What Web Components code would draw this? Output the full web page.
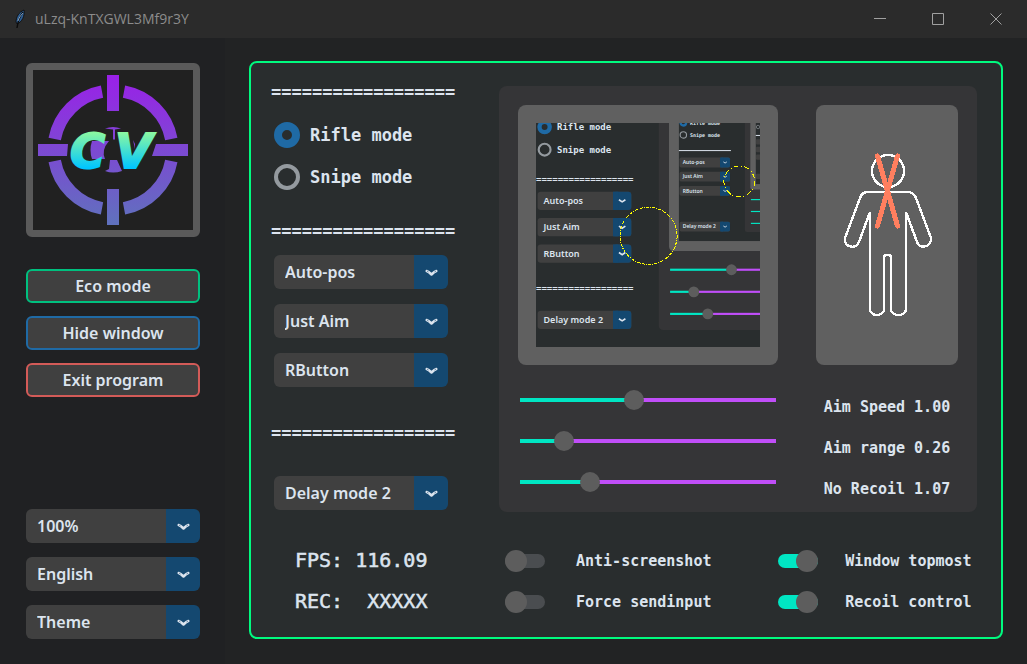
<!DOCTYPE html>
<html lang="en">
<head>
<meta charset="utf-8">
<title>uLzq-KnTXGWL3Mf9r3Y</title>
<style>
  html { height: 100%; }
  body {
    --mono: "DejaVu Sans Mono", "Liberation Mono", monospace;
    --ui: "Noto Sans", "Open Sans", sans-serif;
    --ink: #dce4ee;
    --accent: #1f6aa5;
    --field: #404040;
    --surface: #292d2e;
    --panel: #353537;
    --knob: #5d5d5d;
    --teal: #00e6c3;
    --violet: #c04ef8;
    margin: 0;
    min-height: 100%;
    display: flex;
    background: #222324;
    color: var(--ink);
    font-family: var(--ui);
    font-size: 16px;
  }
</style>
</head>
<body>
<app-window></app-window>

<script>
function define(name, html, setup) {
  const template = document.createElement('template');
  template.innerHTML = html;
  customElements.define(name, class extends HTMLElement {
    constructor() {
      super();
      this.attachShadow({ mode: 'open' }).append(template.content.cloneNode(true));
    }
    connectedCallback() { if (setup) setup(this, this.shadowRoot); }
  });
}

define('title-bar', `
<style>
  :host { display: flex; align-items: center; height: 38px; padding: 0 2px 0 12px; background: #2b2b2b; color: #8c8c8c; }
  h1 { flex: 1; margin: 0 0 0 7px; font: 400 14px/20px "Open Sans", var(--ui); }
  button { width: 58px; height: 38px; padding: 0; border: 0; background: none; color: #a0a0a0; }
  svg { display: block; margin: auto; }
</style>
<svg width="16" height="20" viewBox="0 0 16 20" style="margin:0" aria-hidden="true">
  <path d="M12 1C7 3 4 8 4 13l1 2C10 13 13 7 12 1z" fill="#2d5f96" stroke="#111" stroke-width="1"/>
  <path d="M11 3C8 7 6 11 5 19" fill="none" stroke="#0b0b0b" stroke-width="1.4"/>
  <path d="M11 4C8 7 7 9 6 12" fill="none" stroke="#9ec0e2" stroke-width=".8"/>
</svg>
<h1><slot></slot></h1>
<button aria-label="Minimize"><svg width="12" height="12"><path d="M0 5.5h12" stroke="currentColor"/></svg></button>
<button aria-label="Maximize"><svg width="12" height="12"><path d="M.5.5h11v11H.5z" fill="none" stroke="currentColor"/></svg></button>
<button aria-label="Close"><svg width="12" height="12"><path d="M.5.5l11 11M11.5.5l-11 11" fill="none" stroke="currentColor"/></svg></button>
`);

define('app-logo', `
<style>
  :host { display: block; box-sizing: border-box; border: 7px solid #5a5a5a; border-radius: 6px; background: #212121; }
  svg { display: block; width: 100%; }
  text { font: italic 700 48px "DejaVu Sans", sans-serif; }
</style>
<svg viewBox="33 70 160 160" role="img" aria-label="CV logo">
  <defs>
    <linearGradient id="ring" gradientUnits="userSpaceOnUse" x1="0" y1="75" x2="0" y2="225">
      <stop offset="0" stop-color="#9a20e8"/><stop offset="1" stop-color="#5f72bd"/>
    </linearGradient>
    <linearGradient id="word" gradientUnits="userSpaceOnUse" x1="0" y1="132" x2="0" y2="168">
      <stop offset="0" stop-color="#8cf9a0"/><stop offset="1" stop-color="#00c6ff"/>
    </linearGradient>
  </defs>
  <path d="M124 91.7A59 59 0 0 1 171.3 139M171.3 161A59 59 0 0 1 124 208.3M102 208.3A59 59 0 0 1 54.7 161M54.7 139A59 59 0 0 1 102 91.7" fill="none" stroke="url(#ring)" stroke-width="12.5"/>
  <path d="M107 75h12v36h-12zM107 189h12v36h-12zM38 144h30l-1 12H38zM156 144h32v12h-36z" fill="url(#ring)"/>
  <path d="M105 128.500q8-3 16 0l-6 1v10h-2v-10zM92 141h17q-8 9-4 18H92q-3-9 0-18zM110 160h7l5 11q-9 3-17 0l4-2zM133 140l2 4v5z" fill="url(#ring)"/>
  <text x="70 115" y="168" fill="url(#word)" stroke="url(#word)" stroke-width="2">CV</text>
</svg>
`);

define('action-button', `
<style>
  :host { display: block; }
  button { box-sizing: border-box; width: 100%; height: 34px; padding: 0; border: 2px solid var(--edge); border-radius: 6px; background: var(--field); color: inherit; font: 600 16px/24px var(--ui); }
</style>
<button><slot></slot></button>
`);

define('drop-down', `
<style>
  :host { display: block; position: relative; }
  select { appearance: none; display: block; box-sizing: border-box; width: 100%; height: 34px; padding: 0 40px 0 11px; border: 0; border-radius: 6px; color: inherit; font: 600 16px/24px var(--ui);
    background: linear-gradient(to left, #144870 34px, var(--field) 34px); }
  svg { position: absolute; right: 10px; top: 14px; pointer-events: none; }
</style>
<select></select>
<svg width="13" height="8" viewBox="0 0 13 8" aria-hidden="true">
  <path d="M1.700 2Q3.500 2.500 6.500 5.500Q9.500 2.500 11.300 2" fill="none" stroke="var(--ink)" stroke-width="2.500" stroke-linecap="round" stroke-linejoin="round"/>
  <path d="M2 2l1.500 1M11 2L9.500 3" stroke="#144870" stroke-width=".6"/>
</svg>
`, (host, root) => {
  const select = root.querySelector('select');
  select.setAttribute('aria-label', host.getAttribute('label'));
  select.replaceChildren(new Option(host.getAttribute('value')));
});

define('rule-line', `
<style>:host { display: block; height: 20px; white-space: nowrap; font: 700 17px/20px var(--mono); }</style>
<span>==================</span>
`);

define('mode-picker', `
<style>
  :host { display: grid; gap: 14px; }
  label { display: flex; align-items: center; gap: 10px; height: 28px; font: 700 17px/20px var(--mono); white-space: nowrap; }
  input { appearance: none; box-sizing: border-box; width: 26px; height: 26px; margin: 0; border: 4px solid #949a9f; border-radius: 50%; }
  input:checked { border: 8px solid var(--accent); }
</style>
<label><input type="radio" name="mode" checked>Rifle mode</label>
<label><input type="radio" name="mode">Snipe mode</label>
`);

define('toggle-switch', `
<style>
  :host { display: block; }
  label { display: flex; align-items: center; gap: var(--gap, 31px); height: 41px; margin-left: 6px; font: 700 15px/20px var(--mono); white-space: nowrap; }
  input { appearance: none; display: flex; align-items: center; width: 40px; height: 14px; margin: 0; border-radius: 7px; background: #4a4d50; }
  input::before { content: ""; width: 22px; height: 22px; flex: none; border-radius: 50%; background: var(--knob); }
  input:checked { background: var(--teal); justify-content: flex-end; }
</style>
<label><input type="checkbox"><slot></slot></label>
`, (host, root) => { root.querySelector('input').checked = host.hasAttribute('checked'); });

define('capture-view', `
<style>
  :host { display: block; padding: 18px; border-radius: 8px; background: #606060; }
  .screen { display: block; width: 100%; }
  .m { font-family: "DejaVu Sans Mono", monospace; font-weight: 700; }
  .u { font-family: "Noto Sans", sans-serif; font-weight: 600; }
</style>
<svg class="screen" viewBox="0 0 224 224" role="img" aria-label="Capture preview"></svg>
`, (host, root) => {
  const k = 0.5385;
  function frame(ox, oy, s, depth) {
    const X = v => +(ox + (v - 271) * s).toFixed(2);
    const Y = v => +(oy + (v - 127.500) * s).toFixed(2);
    const box = (x, y, w, h, r, fill) => `<rect x="${X(x)}" y="${Y(y)}" width="${w * s}" height="${h * s}" rx="${r * s}" fill="${fill}"/>`;
    const size = depth === 1 ? 9 : 5;
    const text = (x, y, t, cls) => depth > 2 ? '' : `<text class="${cls}" x="${X(x)}" y="${Y(y)}" font-size="${size}" fill="#dce4ee">${t}</text>`;
    let out = box(271, 127.500, 224 / k, 224 / k, 0, '#292d2e');
    out += box(499, 86, 478, 426, 8, '#353537');
    out += `<circle cx="${X(287)}" cy="${Y(135)}" r="${9.500 * s}" fill="none" stroke="#1f6aa5" stroke-width="${8 * s}"/>`;
    out += `<circle cx="${X(287)}" cy="${Y(177)}" r="${11 * s}" fill="none" stroke="#949a9f" stroke-width="${4 * s}"/>`;
    out += text(310, 141, 'Rifle mode', 'm') + text(310, 183, 'Snipe mode', 'm');
    for (const y of [231, 433]) {
      if (depth === 1) out += text(271, y + 6, '==================', 'm');
      else out += y === 231 ? `<path d="M${X(271)} ${Y(y)}h${180 * s}" stroke="#dce4ee"/>` : '';
    }
    [[255, 'Auto-pos'], [304, 'Just Aim'], [353, 'RButton'], [476, 'Delay mode 2']].forEach(([y, t]) => {
      out += box(274, y, 174, 34, 6, '#404040') + box(414, y, 34, 34, 6, '#144870') + box(414, y, 10, 34, 0, '#144870');
      out += text(285, y + 23, t, 'u');
      out += `<path d="M${X(425)} ${Y(y + 15)}l${6 * s} ${4 * s} ${6 * s} ${-4 * s}" fill="none" stroke="#dce4ee" stroke-width="${3 * s}"/>`;
    });
    out += box(518, 105, 260, 260, 8, '#606060');
    [[400, 634], [441, 564], [482, 590]].forEach(([y, x]) => {
      out += box(520, y - 2, x - 520, 4, 0, '#00e6c3') + box(x, y - 2, 776 - x, 4, 0, '#c04ef8');
      out += `<circle cx="${X(x)}" cy="${Y(y)}" r="${10 * s}" fill="#5d5d5d"/>`;
    });
    if (depth < 3) {
      out += `<svg x="${X(536)}" y="${Y(123)}" width="${224 * s}" height="${224 * s}">${frame(0, 0, s * k, depth + 1)}</svg>`;
    }
    out += `<circle cx="${X(480)}" cy="${Y(337)}" r="${53 * s}" fill="none" stroke="#ff0" stroke-width="1" shape-rendering="crispEdges" stroke-dasharray="${depth === 1 ? '3 1 1 1' : '5 3 1 2'}"/>`;
    return out;
  }
  root.querySelector('.screen').innerHTML = frame(0, 0, k, 1);
});

define('target-figure', `
<style>
  :host { display: flex; align-items: center; justify-content: center; border-radius: 8px; background: #606060; }
  svg { display: block; width: 142px; }
</style>
<svg viewBox="816 105 142 260" role="img" aria-label="Aim target" fill="none" stroke-linecap="round" shape-rendering="crispEdges">
  <g stroke="#fff" stroke-width="2.4">
    <circle cx="888" cy="171" r="16"/>
    <path d="M868 192H907Q914 192 916 198L931 238C932 247 919 250 917 242L906 212V309C906 317 891 317 891 309V257Q891 255 888 255 884 255 884 257V309C884 317 870 317 870 309V212L859 242C856 250 843 247 845 238L860 198Q862 192 868 192z"/>
  </g>
  <path d="M877.500 156l20 70M897.500 156l-20 70" stroke="#ff7f5f" stroke-width="5"/>
</svg>
`);

define('tuning-panel', `
<style>
  :host { display: grid; grid-template-columns: 1fr 142px; column-gap: 38px; align-content: start; padding: 19px 19px 3px; border-radius: 8px; background: var(--panel); }
  .sliders { display: grid; grid-auto-rows: 41px; margin-top: 14px; padding: 0 2px; align-items: center; }
  .names { display: grid; grid-auto-rows: 41px; margin-top: 21px; align-items: center; justify-items: center; font: 700 15px/20px var(--mono); white-space: nowrap; }
  input { appearance: none; width: 100%; height: 20px; margin: 0; background: linear-gradient(to right, var(--teal) var(--fill), var(--violet) var(--fill)) center / 100% 4px no-repeat; }
  input::-webkit-slider-thumb { appearance: none; width: 20px; height: 20px; border-radius: 50%; background: var(--knob); }
</style>
<capture-view></capture-view>
<target-figure></target-figure>
<div class="sliders">
  <input id="speed" type="range" step="any" value="44" style="--fill:44%">
  <input id="range" type="range" step="any" value="14.4" style="--fill:16%">
  <input id="recoil" type="range" step="any" value="25.4" style="--fill:26%">
</div>
<div class="names">
  <label for="speed">Aim Speed 1.00</label>
  <label for="range">Aim range 0.26</label>
  <label for="recoil">No Recoil 1.07</label>
</div>
`);

define('status-readout', `
<style>
  :host { display: block; padding-left: 24px; }
  p { height: 41px; margin: 0; font: 400 20px/41px var(--mono); white-space: pre; -webkit-text-stroke: 0.5px; }
</style>
<p>FPS: 116.09</p>
<p>REC:  XXXXX</p>
`);

define('side-bar', `
<style>
  :host { display: flex; flex-direction: column; width: 174px; flex: none; padding-top: 2px; }
  nav, .prefs { display: grid; }
  nav { gap: 13px; margin-top: 32px; }
  .prefs { gap: 14px; margin-top: auto; padding-top: 32px; }
</style>
<app-logo></app-logo>
<nav>
  <action-button style="--edge:#00c07f">Eco mode</action-button>
  <action-button style="--edge:#1f6aa5">Hide window</action-button>
  <action-button style="--edge:#d35b58">Exit program</action-button>
</nav>
<div class="prefs">
  <drop-down label="Scale" value="100%"></drop-down>
  <drop-down label="Language" value="English"></drop-down>
  <drop-down label="Theme" value="Theme"></drop-down>
</div>
`);

define('control-board', `
<style>
  :host { display: grid; grid-template-columns: 228px 1fr; align-content: start; row-gap: 28px; flex: 1; padding: 23px 24px 14px 20px; border: 2px solid #00fa7f; border-radius: 8px; background: var(--surface); }
  .modes mode-picker { margin: 19px 3px 30px; }
  .modes drop-down { width: 174px; margin-left: 3px; }
  .group { display: grid; gap: 15px; margin: 14px 0 36px; }
  rule-line + drop-down { margin-top: 33px; }
  rule-line:first-child { margin-top: -4px; }
  .switches { display: grid; grid-template-columns: 4fr 3fr; }
</style>
<section class="modes">
  <rule-line></rule-line>
  <mode-picker></mode-picker>
  <rule-line></rule-line>
  <div class="group">
    <drop-down label="Aim position" value="Auto-pos"></drop-down>
    <drop-down label="Action" value="Just Aim"></drop-down>
    <drop-down label="Trigger" value="RButton"></drop-down>
  </div>
  <rule-line></rule-line>
  <drop-down label="Delay" value="Delay mode 2"></drop-down>
</section>
<tuning-panel></tuning-panel>
<status-readout></status-readout>
<div class="switches">
  <toggle-switch>Anti-screenshot</toggle-switch>
  <toggle-switch checked style="--gap:27px">Window topmost</toggle-switch>
  <toggle-switch>Force sendinput</toggle-switch>
  <toggle-switch checked style="--gap:27px">Recoil control</toggle-switch>
</div>
`);

define('app-window', `
<style>
  :host { display: flex; flex-direction: column; flex: 1; box-sizing: border-box; }
  main { display: flex; flex: 1; gap: 49px; padding: 23px 24px 25px 26px; background: linear-gradient(to right, #202123 225px, #222324 225px); }
</style>
<title-bar>uLzq-KnTXGWL3Mf9r3Y</title-bar>
<main>
  <side-bar></side-bar>
  <control-board></control-board>
</main>
`);
</script>
</body>
</html>
